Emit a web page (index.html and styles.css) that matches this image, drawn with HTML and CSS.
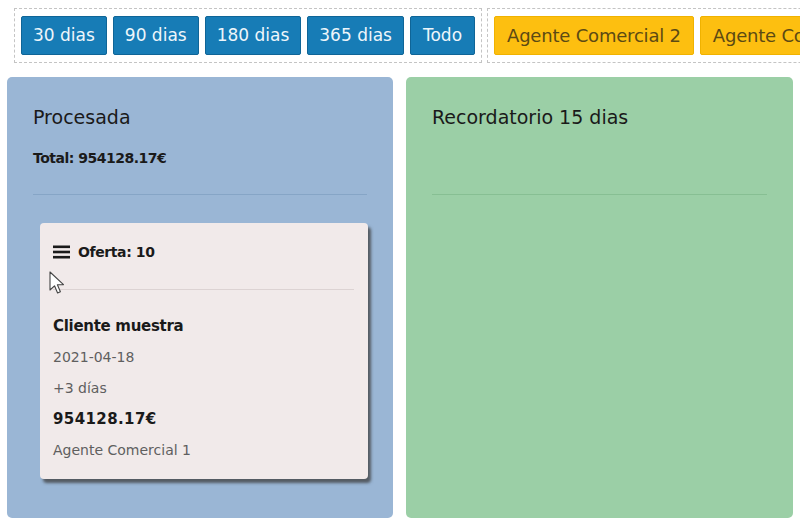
FILE: index.html
```html
<!DOCTYPE html>
<html lang="es">
<head>
<meta charset="utf-8">
<title>Ofertas</title>
<link rel="stylesheet" href="styles.css">
</head>
<body>
<div class="toolbar">
  <div class="group">
    <button class="btn btn-blue">30 dias</button>
    <button class="btn btn-blue">90 dias</button>
    <button class="btn btn-blue">180 dias</button>
    <button class="btn btn-blue">365 dias</button>
    <button class="btn btn-blue btn-wide">Todo</button>
  </div>
  <div class="group">
    <button class="btn btn-yellow">Agente Comercial 2</button>
    <button class="btn btn-yellow">Agente Comercial 1</button>
  </div>
</div>
<div class="board">
  <section class="column column-blue">
    <h2 class="column-title">Procesada</h2>
    <div class="column-total">Total: 954128.17€</div>
    <hr class="column-rule">
    <div class="card">
      <div class="card-head">
        <svg class="menu-icon" width="17" height="14" viewBox="0 0 17 14"><rect x="0" y="0.5" width="17" height="2.6" fill="#1a1a1a"/><rect x="0" y="5.7" width="17" height="2.6" fill="#1a1a1a"/><rect x="0" y="10.9" width="17" height="2.6" fill="#1a1a1a"/></svg>
        <span>Oferta: 10</span>
      </div>
      <hr class="card-rule">
      <div class="card-line strong">Cliente muestra</div>
      <div class="card-line muted">2021-04-18</div>
      <div class="card-line muted">+3 días</div>
      <div class="card-line strong amount">954128.17€</div>
      <div class="card-line muted">Agente Comercial 1</div>
      <svg class="cursor" width="16" height="24" viewBox="0 0 16 24"><path d="M1 1 L1 19 L5.5 14.8 L8.6 22 L11.4 20.8 L8.4 13.8 L14.5 13.6 Z" fill="#ffffff" stroke="#444" stroke-width="1.1" stroke-linejoin="round"/></svg>
    </div>
  </section>
  <section class="column column-green">
    <h2 class="column-title">Recordatorio 15 dias</h2>
    <div class="column-total"></div>
    <hr class="column-rule green-rule">
  </section>
</div>
</body>
</html>
```
FILE: styles.css
```css
* { box-sizing: border-box; }
html, body { margin: 0; padding: 0; background: #ffffff; }
body {
  font-family: "DejaVu Sans", "Liberation Sans", sans-serif;
  width: 800px;
  height: 523px;
  overflow: hidden;
  color: #1a1a1a;
}
.toolbar {
  display: flex;
  gap: 5px;
  padding: 8px 0 0 14px;
  white-space: nowrap;
}
.group {
  display: flex;
  gap: 6px;
  border: 1px dashed #c4c4c4;
  padding: 7px 6px;
  flex-shrink: 0;
}
.btn {
  height: 39px;
  font-family: inherit;
  font-size: 17px;
  padding: 0 11px;
  border-radius: 2px;
  cursor: pointer;
  line-height: 37px;
}
.btn-wide { padding: 0 12px; }
.btn-blue {
  background: #177cb6;
  color: #eef6fb;
  border: 1px solid #0f6597;
}
.btn-yellow {
  background: #fdbf10;
  color: #5c4a14;
  border: 1px solid #f0b200;
  font-size: 18px;
  padding: 0 12px;
  letter-spacing: -0.2px;
}
.board {
  display: flex;
  gap: 13px;
  padding: 14px 0 0 7px;
}
.column {
  width: 386px;
  height: 441px;
  border-radius: 5px;
  padding: 0 26px;
  flex-shrink: 0;
}
.column-green { width: 387px; background: #9bcfa6; }
.column-blue { background: #9ab6d5; }
.column-title {
  margin: 0;
  padding-top: 26px;
  font-size: 19px;
  line-height: 28px;
  font-weight: 400;
}
.column-total {
  margin-top: 17px;
  height: 20px;
  font-size: 14px;
  line-height: 20px;
  font-weight: 700;
  letter-spacing: -0.5px;
}
.column-rule {
  margin: 26px 0 0 0;
  border: 0;
  border-top: 1px solid #86a5c6;
  height: 0;
}
.green-rule { border-top-color: #87bf93; }
.card {
  position: relative;
  margin: 28px 0 0 7px;
  width: 328px;
  height: 256px;
  background: #f1eaea;
  border-radius: 4px;
  box-shadow: 3px 4px 3px rgba(60, 60, 60, 0.75);
  padding: 17px 14px 0 13px;
}
.card-head {
  display: flex;
  align-items: center;
  gap: 8px;
  height: 24px;
  font-size: 14px;
  font-weight: 700;
  letter-spacing: -0.4px;
}
.card-rule {
  margin: 25px 0 21px 0;
  border: 0;
  border-top: 1px solid #dcd3d3;
  height: 0;
}
.card-line {
  height: 31px;
  line-height: 31px;
  font-size: 14px;
}
.card-line.strong { font-weight: 700; font-size: 15px; color: #1a1a1a; letter-spacing: -0.3px; }
.card-line.amount { letter-spacing: 0.4px; }
.card-line.muted { color: #5f5f5f; }
.cursor {
  position: absolute;
  left: 9px;
  top: 48px;
}
```
